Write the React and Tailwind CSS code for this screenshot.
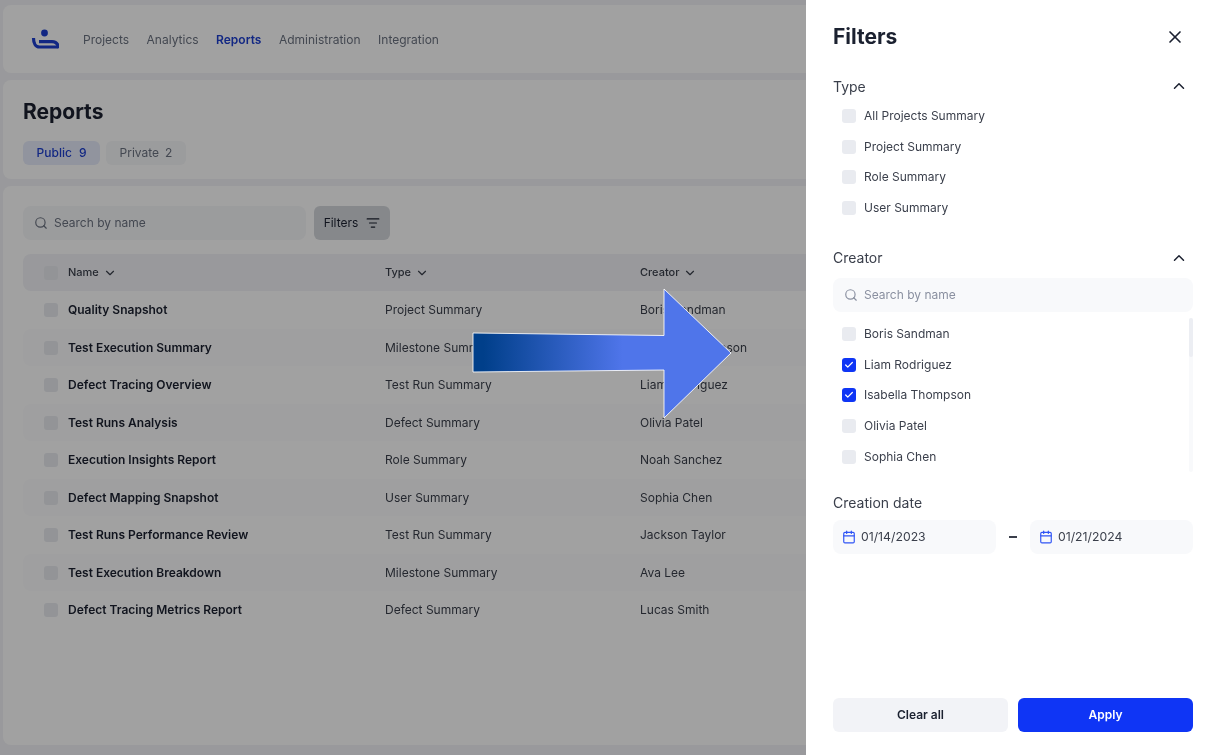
import { ChevronDown, ChevronUp, Search, X, Calendar, Check, ListFilter } from 'lucide-react';

const navItems = ['Projects', 'Analytics', 'Reports', 'Administration', 'Integration'];

const rows = [
  ['Quality Snapshot', 'Project Summary', 'Boris Sandman'],
  ['Test Execution Summary', 'Milestone Summary', 'Isabella Thompson'],
  ['Defect Tracing Overview', 'Test Run Summary', 'Liam Rodriguez'],
  ['Test Runs Analysis', 'Defect Summary', 'Olivia Patel'],
  ['Execution Insights Report', 'Role Summary', 'Noah Sanchez'],
  ['Defect Mapping Snapshot', 'User Summary', 'Sophia Chen'],
  ['Test Runs Performance Review', 'Test Run Summary', 'Jackson Taylor'],
  ['Test Execution Breakdown', 'Milestone Summary', 'Ava Lee'],
  ['Defect Tracing Metrics Report', 'Defect Summary', 'Lucas Smith'],
];

const typeOptions = ['All Projects Summary', 'Project Summary', 'Role Summary', 'User Summary'];

const creators = [
  ['Boris Sandman', false],
  ['Liam Rodriguez', true],
  ['Isabella Thompson', true],
  ['Olivia Patel', false],
  ['Sophia Chen', false],
];

function Logo() {
  return (
    <svg width="28" height="20" viewBox="0 0 28 20" fill="none">
      <circle cx="13.5" cy="4" r="3.4" fill="#1d3fd0" />
      <path d="M2.5 9c0 5 2 9 6 9h19" stroke="#1d3fd0" strokeWidth="3.2" />
      <path d="M8 12.6h13c4 0 6 2 6.5 6.4" stroke="#1d3fd0" strokeWidth="3.2" />
    </svg>
  );
}

function Checkbox({ checked }) {
  if (checked) {
    return (
      <span className="flex h-[14px] w-[14px] items-center justify-center rounded-[3px] bg-[#0f35f5]">
        <Check size={10} strokeWidth={3} className="text-white" />
      </span>
    );
  }
  return <span className="block h-[14px] w-[14px] rounded-[3px] bg-[#e9ebf0]" />;
}

function OptionRow({ label, checked }) {
  return (
    <div className="flex h-[30.7px] items-center gap-[8px] pl-[9px] text-[12px] text-[#3a3f4b]">
      <Checkbox checked={checked} />
      <span>{label}</span>
    </div>
  );
}

function DateField({ value }) {
  return (
    <div className="flex h-[34px] flex-1 items-center gap-[5px] rounded-lg bg-[#f8f9fb] pl-[9px] text-[12.25px] text-[#3a3f4b]">
      <Calendar size={14} className="text-[#2f54f5]" />
      {value}
    </div>
  );
}

function Background() {
  return (
    <div className="flex h-[755px] flex-col gap-[7px] bg-[#f2f3f7] pb-[10px] pl-[3px] pt-[5px] blur-[0.5px]">
      <header className="flex h-[68px] items-center gap-[24px] rounded-lg bg-white pl-[28px]">
        <Logo />
        <nav className="flex items-center gap-[17.5px] pt-[1px] text-[12px] text-[#6b7280]">
          {navItems.map((item) => (
            <span key={item} className={item === 'Reports' ? 'font-semibold text-[#1d3fd0]' : ''}>
              {item}
            </span>
          ))}
        </nav>
      </header>

      <section className="h-[99px] rounded-lg bg-white pl-[20px] pt-[18px]">
        <h1 className="text-[21px] font-bold leading-[28px] text-[#1b2130]">Reports</h1>
        <div className="mt-[15px] flex gap-[6px] text-[12px]">
          <span className="flex h-[24px] w-[77px] items-center justify-center gap-[7px] rounded-md bg-[#e6ebfa] font-medium text-[#1d3fd0]">
            <span>Public</span>
            <span>9</span>
          </span>
          <span className="flex h-[24px] w-[80px] items-center justify-center gap-[6px] rounded-md bg-[#f6f7f9] text-[#6b7280]">
            <span>Private</span>
            <span>2</span>
          </span>
        </div>
      </section>

      <section className="min-h-0 flex-1 rounded-lg bg-white pl-[20px] pt-[20px]">
        <div className="flex gap-2">
          <div className="flex h-[34px] w-[283px] items-center gap-[6px] rounded-lg bg-[#f6f7f9] pl-[11px] text-[12px] text-[#6b7280]">
            <Search size={14} />
            Search by name
          </div>
          <div className="flex h-[34px] w-[76px] items-center justify-center gap-[8px] rounded-md bg-[#d5d8dd] text-[12px] text-[#1b2130]">
            Filters
            <ListFilter size={14} />
          </div>
        </div>

        <div className="mt-[14px] flex h-[37px] items-center rounded-l-lg bg-[#f2f3f7] text-[11px] font-medium text-[#3a3f4b]">
          <span className="ml-[21px] mr-[10px] block h-[14px] w-[14px] rounded-[3px] bg-[#e9ebf0]" />
          <span className="flex w-[317px] items-center gap-1">
            Name <ChevronDown size={14} />
          </span>
          <span className="flex w-[255px] items-center gap-1">
            Type <ChevronDown size={14} />
          </span>
          <span className="flex items-center gap-1">
            Creator <ChevronDown size={14} />
          </span>
        </div>

        {rows.map(([name, type, creator], i) => (
          <div
            key={name}
            className={`flex h-[37.5px] items-center rounded-l-lg pt-[1px] text-[12px] text-[#3a3f4b] ${i % 2 === 1 ? 'bg-[#fcfcfd]' : ''}`}
          >
            <span className="ml-[21px] mr-[10px] block h-[14px] w-[14px] rounded-[3px] bg-[#e9ebf0]" />
            <span className="w-[317px] font-semibold text-[#1b2130]">{name}</span>
            <span className="w-[255px]">{type}</span>
            <span>{creator}</span>
          </div>
        ))}
      </section>
    </div>
  );
}

function FilterPanel() {
  return (
    <aside className="absolute bottom-0 right-0 top-0 flex w-[400px] flex-col bg-white pb-[23px] pl-[27px] pr-[13px] pt-[23px] blur-[0.3px]">
      <div className="flex h-[28px] items-center justify-between pr-[8px]">
        <h2 className="text-[21px] font-bold text-[#1b2130]">Filters</h2>
        <X size={20} className="text-[#1b2130]" />
      </div>

      <div className="mt-[25px] flex h-[20px] items-center justify-between pr-[5px] text-[14px] text-[#3a3f4b]">
        Type
        <ChevronUp size={18} className="text-[#1b2130]" />
      </div>
      <div className="mt-[4.5px]">
        {typeOptions.map((label) => (
          <OptionRow key={label} label={label} />
        ))}
      </div>

      <div className="mt-[24.5px] flex h-[20px] items-center justify-between pr-[5px] text-[14px] text-[#3a3f4b]">
        Creator
        <ChevronUp size={18} className="text-[#1b2130]" />
      </div>
      <div className="mt-[10px] flex h-[34px] items-center gap-[6px] rounded-lg bg-[#f8f9fb] pl-[11px] text-[12px] text-[#8a90a0]">
        <Search size={14} />
        Search by name
      </div>

      <div className="relative mt-[6px] h-[154px] pt-[1px]">
        {creators.map(([label, checked]) => (
          <OptionRow key={label} label={label} checked={checked} />
        ))}
        <div className="absolute bottom-0 right-0 top-0 w-[4px] rounded-full bg-[#f8f9fb]">
          <div className="h-[39px] rounded-full bg-[#eceef3]" />
        </div>
      </div>

      <div className="mt-[21.5px] text-[14px] leading-[20px] text-[#3a3f4b]">Creation date</div>
      <div className="mt-[6.5px] flex items-center">
        <DateField value="01/14/2023" />
        <span className="mx-[13px] h-[2px] w-[8px] bg-[#3a3f4b]" />
        <DateField value="01/21/2024" />
      </div>

      <div className="mt-auto flex gap-[10px] text-[12px] font-semibold">
        <button className="h-[34px] flex-1 rounded-md bg-[#f2f3f7] text-[#1b2130]">Clear all</button>
        <button className="h-[34px] flex-1 rounded-md bg-[#0f35f5] text-white">Apply</button>
      </div>
    </aside>
  );
}

function Arrow() {
  return (
    <svg className="absolute left-[470px] top-[285px]" width="265" height="136" viewBox="0 0 265 136" fill="none">
      <defs>
        <linearGradient id="arrowFill" x1="3" x2="261" y1="0" y2="0" gradientUnits="userSpaceOnUse">
          <stop offset="0.04" stopColor="#003f8a" />
          <stop offset="0.58" stopColor="#4f75ea" />
          <stop offset="1" stopColor="#4f75ea" />
        </linearGradient>
      </defs>
      <path
        d="M3 48 L194 50.5 V4 L261 68 L194 133 V85 L3 87 Z"
        fill="url(#arrowFill)"
        stroke="#ffffff"
        strokeOpacity="0.85"
        strokeWidth="1"
      />
    </svg>
  );
}

export default function App() {
  return (
    <div className="relative h-[755px] overflow-hidden font-['Inter',sans-serif]">
      <Background />
      <div className="absolute inset-0 bg-black/[0.37]" />
      <Arrow />
      <FilterPanel />
    </div>
  );
}
